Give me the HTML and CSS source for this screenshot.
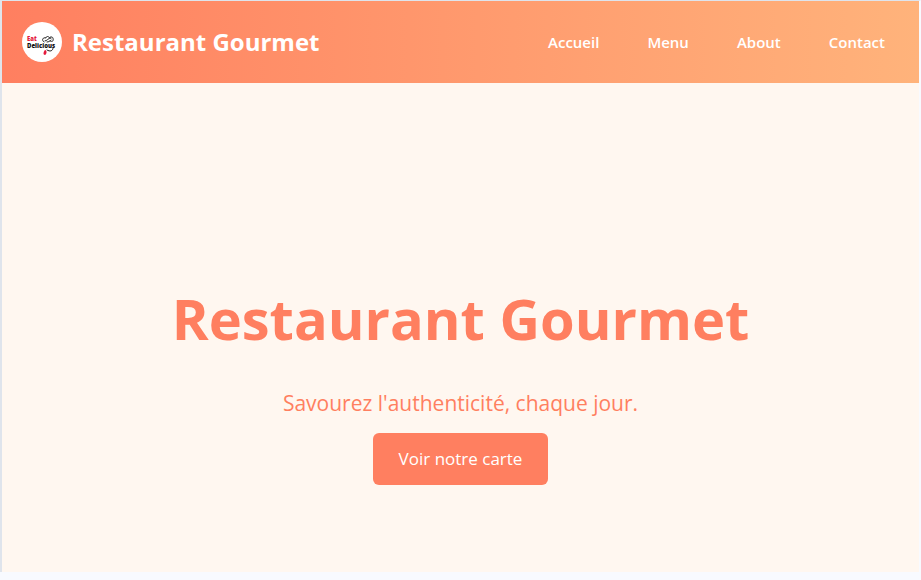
FILE: index.html
```html
<!DOCTYPE html>
<html lang="fr">
<head>
  <meta charset="utf-8">
  <meta name="viewport" content="width=device-width, initial-scale=1">
  <title>Restaurant Gourmet</title>
  <link rel="stylesheet" href="styles.css">
</head>
<body>
  <div class="page">
    <header class="navbar">
      <div class="brand">
        <svg class="brand-logo" viewBox="0 0 40 40" role="img" aria-label="Eat Delicious">
          <circle cx="20" cy="20" r="20" fill="#fff"/>
          <text class="logo-word logo-red" x="5" y="19">Eat</text>
          <text class="logo-word" x="5" y="26">Delicious</text>
          <g fill="none" stroke="#222" stroke-width="1" stroke-linecap="round">
            <path d="M22 20c-3-2-1-5 2-4 0-2 3-2 3.500 0 1-2 4-1 3.500 1 1 2-1 3-3 2"/>
            <path d="M23 19c2 0 3-3 6-3M25 20c2 0 3-1 4-2"/>
            <path d="M31 26c0 3-3 4-6 2"/>
          </g>
          <path d="M23 28c2 0 2 4 0 5-2 0-2-3 0-5z" fill="#e5193c"/>
        </svg>
        <span class="brand-name">Restaurant Gourmet</span>
      </div>
      <nav class="nav-links" aria-label="Navigation principale">
        <a href="#accueil">Accueil</a>
        <a href="#menu">Menu</a>
        <a href="#about">About</a>
        <a href="#contact">Contact</a>
      </nav>
    </header>
    <main class="hero" id="accueil">
      <h1>Restaurant Gourmet</h1>
      <p>Savourez l'authenticité, chaque jour.</p>
      <a class="hero-button" href="#menu">Voir notre carte</a>
    </main>
  </div>
</body>
</html>
```
FILE: styles.css
```css
* {
  box-sizing: border-box;
}

body {
  margin: 0;
  background: #f8faff;
  font-family: "Segoe UI", "Open Sans", "Noto Sans", sans-serif;
}

.page {
  display: flex;
  flex-direction: column;
  min-height: calc(100vh - 8px);
  border: solid #dfe4ec;
  border-width: 1px 2px 0;
  border-right-color: #f8faff;
  background: #fff7f0;
}

.navbar {
  display: flex;
  align-items: center;
  justify-content: space-between;
  padding: 21px 34px 21px 20px;
  background: linear-gradient(90deg, #ff7f60, #ffb37b);
  color: #fff;
}

.brand {
  display: flex;
  align-items: center;
  gap: 10px;
}

.brand-logo {
  width: 40px;
  height: 40px;
}

.logo-word {
  font: 900 6px "Open Sans", sans-serif;
  fill: #111;
}

.logo-red {
  fill: #e5193c;
}

.brand-name {
  font-size: 24px;
  font-weight: 700;
  line-height: 40px;
}

.nav-links {
  display: flex;
  gap: 48px;
}

.nav-links a {
  color: inherit;
  font-size: 15px;
  font-weight: 600;
  line-height: 24px;
  text-decoration: none;
}

.hero {
  display: flex;
  flex: 1;
  flex-direction: column;
  align-items: center;
  justify-content: flex-end;
  padding: 0 20px 87px;
  color: #ff7f60;
  text-align: center;
}

.hero h1 {
  margin: 0 0 32px;
  font-size: 56px;
  font-weight: 700;
  line-height: 76px;
}

.hero p {
  margin: 0 0 15px;
  font-size: 21px;
  line-height: 30px;
}

.hero-button {
  padding: 12px 26px;
  border-radius: 6px;
  background: #ff7f60;
  color: #fff;
  font-size: 17px;
  line-height: 28px;
  text-decoration: none;
}
```
